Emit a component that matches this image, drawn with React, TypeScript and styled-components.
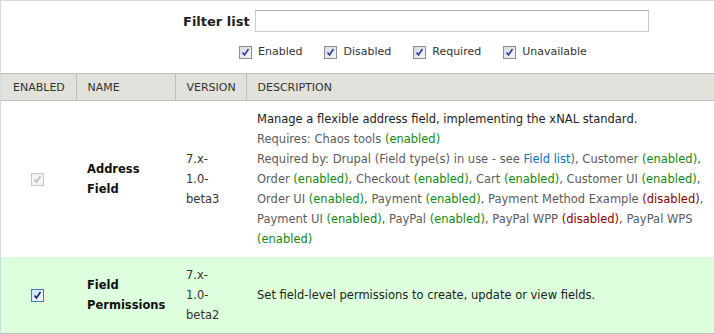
import React from 'react';
import styled, { createGlobalStyle } from 'styled-components';

const GlobalStyle = createGlobalStyle`
  html, body {
    margin: 0;
    padding: 0;
    background: #fff;
    overflow: hidden;
  }
  body {
    font-family: "DejaVu Sans", Verdana, sans-serif;
    color: #333;
  }
`;

const Frame = styled.div`
  border-top: 1px solid #d4dbe0;
  border-left: 1px solid #d4dbe0;
  height: 100vh;
  box-sizing: border-box;
`;

const FilterRow = styled.div`
  display: flex;
  align-items: center;
  padding: 9px 0 0 182px;
  gap: 5px;
`;

const FilterLabel = styled.label`
  font-size: 13px;
  font-weight: bold;
  color: #222;
`;

const FilterInput = styled.input`
  width: 394px;
  height: 22px;
  box-sizing: border-box;
  border: 1px solid #ccc;
  border-top-color: #a8a8a8;
  padding: 0 4px;
  margin: 0;
`;

const StatusRow = styled.div`
  display: flex;
  gap: 22px;
  margin: 13px 0 0 238px;
`;

const StatusItem = styled.label`
  display: flex;
  align-items: center;
  gap: 6px;
  font-size: 11px;
  color: #333;
  line-height: 14px;
`;

type BoxKind = 'filter' | 'on' | 'off';

const Box = styled.span<{ $kind: BoxKind }>`
  display: inline-flex;
  align-items: center;
  justify-content: center;
  width: 13px;
  height: 13px;
  box-sizing: border-box;
  border: 1px solid
    ${({ $kind }) => ($kind === 'on' ? '#3f7cb8' : $kind === 'off' ? '#c8c8c8' : '#8d8d8d')};
  background: ${({ $kind }) =>
    $kind === 'off'
      ? '#f3f3f3'
      : $kind === 'on'
        ? 'linear-gradient(135deg, #cfe3f6, #f4f8fc)'
        : 'linear-gradient(135deg, #d5d9e2, #f7f7f9)'};
  flex: none;
  vertical-align: middle;
`;

function Checkbox({ kind }: { kind: BoxKind }) {
  const stroke = kind === 'off' ? '#bdbdbd' : kind === 'on' ? '#13246e' : '#2a3f8f';
  return (
    <Box $kind={kind}>
      <svg width="9" height="9" viewBox="0 0 9 9">
        <path d="M1.5 4.5 L3.5 7 L7.5 1" fill="none" stroke={stroke} strokeWidth="1.6" />
      </svg>
    </Box>
  );
}

const Table = styled.table`
  margin-top: 14px;
  width: 760px;
  border-collapse: collapse;
  table-layout: fixed;
`;

const HeadCell = styled.th<{ $w?: number }>`
  ${({ $w }) => ($w ? `width: ${$w}px;` : '')}
  box-sizing: border-box;
  background: #e1e2dc;
  border: 1px solid #bebfb9;
  border-left: none;
  height: 27px;
  padding: 0 4px 0 11px;
  text-align: left;
  font-weight: normal;
  font-size: 11px;
  color: #333;
  text-transform: uppercase;
  white-space: nowrap;
  &:first-child {
    padding-left: 12px;
  }
`;

const Row = styled.tr<{ $enabled?: boolean }>`
  background: ${({ $enabled }) => ($enabled ? '#ddffdd' : '#fff')};
  ${({ $enabled }) => ($enabled ? 'border-bottom: 1px solid #bebfb9;' : '')}
`;

const Cell = styled.td`
  box-sizing: border-box;
  padding: 8px 10px 8px 11px;
  vertical-align: middle;
  font-size: 11.5px;
  line-height: 20px;
  color: #333;
`;

const CheckCell = styled(Cell)`
  padding-left: 30px;
  line-height: 13px;
`;

const NameCell = styled(Cell)`
  font-weight: bold;
  color: #111;
`;

const VersionCell = styled(Cell)`
  padding-right: 22px;
`;

const DescCell = styled(Cell)`
  padding-right: 50px;
`;

const Lead = styled.div`
  color: #222;
`;

const Meta = styled.div`
  color: #5c5c5c;
`;

const State = styled.span<{ $off?: boolean }>`
  color: ${({ $off }) => ($off ? '#880000' : '#118811')};
`;

const Link = styled.a`
  color: #0074bd;
  text-decoration: none;
`;

const on = <State>(enabled)</State>;
const off = <State $off>(disabled)</State>;

export default function App() {
  return (
    <>
      <GlobalStyle />
      <Frame>
        <FilterRow>
          <FilterLabel>Filter list</FilterLabel>
          <FilterInput type="text" />
        </FilterRow>
        <StatusRow>
          {['Enabled', 'Disabled', 'Required', 'Unavailable'].map((s) => (
            <StatusItem key={s}>
              <Checkbox kind="filter" />
              {s}
            </StatusItem>
          ))}
        </StatusRow>
        <Table>
          <thead>
            <tr>
              <HeadCell $w={75}>Enabled</HeadCell>
              <HeadCell $w={99}>Name</HeadCell>
              <HeadCell $w={71}>Version</HeadCell>
              <HeadCell>Description</HeadCell>
            </tr>
          </thead>
          <tbody>
            <Row>
              <CheckCell>
                <Checkbox kind="off" />
              </CheckCell>
              <NameCell>Address Field</NameCell>
              <VersionCell>7.x-1.0-beta3</VersionCell>
              <DescCell>
                <Lead>Manage a flexible address field, implementing the xNAL standard.</Lead>
                <Meta>Requires: Chaos tools {on}</Meta>
                <Meta>
                  Required by: Drupal (Field type(s) in use - see <Link href="#">Field list</Link>),
                  Customer {on}, Order {on}, Checkout {on}, Cart {on}, Customer UI {on}, Order UI{' '}
                  {on}, Payment {on}, Payment Method Example {off}, Payment UI {on}, PayPal {on},
                  PayPal WPP {off}, PayPal WPS {on}
                </Meta>
              </DescCell>
            </Row>
            <Row $enabled>
              <CheckCell>
                <Checkbox kind="on" />
              </CheckCell>
              <NameCell>Field Permissions</NameCell>
              <VersionCell>7.x-1.0-beta2</VersionCell>
              <DescCell>
                <Lead>Set field-level permissions to create, update or view fields.</Lead>
              </DescCell>
            </Row>
          </tbody>
        </Table>
      </Frame>
    </>
  );
}
